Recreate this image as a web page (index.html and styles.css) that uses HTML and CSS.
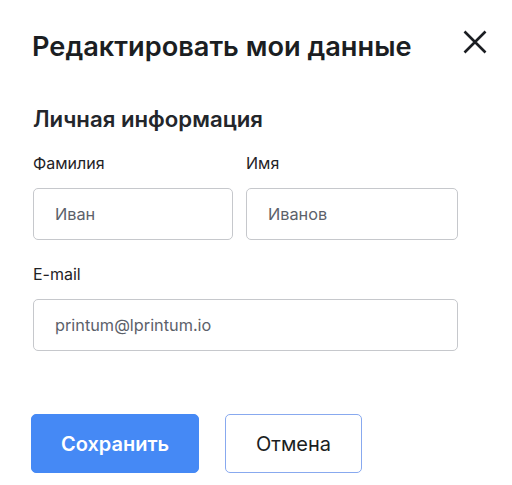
FILE: index.html
```html
<!DOCTYPE html>
<html lang="ru">
<head>
<meta charset="utf-8">
<link rel="stylesheet" href="styles.css">
</head>
<body>
<div class="modal">
  <div class="header">
    <h1 class="title">Редактировать мои данные</h1>
    <button class="close" aria-label="Закрыть">
      <svg width="24" height="24" viewBox="0 0 24 24"><path d="M1.5 1.5 L22.5 22.5 M22.5 1.5 L1.5 22.5" stroke="#1b1e22" stroke-width="2.6" fill="none"/></svg>
    </button>
  </div>
  <h2 class="subtitle">Личная информация</h2>
  <div class="grid">
    <div class="field">
      <label class="label">Фамилия</label>
      <div class="input">Иван</div>
    </div>
    <div class="field">
      <label class="label">Имя</label>
      <div class="input">Иванов</div>
    </div>
    <div class="field wide">
      <label class="label">E-mail</label>
      <div class="input">printum@lprintum.io</div>
    </div>
  </div>
  <div class="actions">
    <button class="btn primary">Сохранить</button>
    <button class="btn secondary">Отмена</button>
  </div>
</div>
</body>
</html>
```
FILE: styles.css
```css
* { box-sizing: border-box; }
body {
  margin: 0;
  background: #fff;
  font-family: Inter, "Noto Sans", sans-serif;
  color: #1b1e22;
}
.modal {
  padding: 30px 25px 0 32px;
}
.header {
  display: flex;
  justify-content: space-between;
  align-items: flex-start;
}
.title {
  margin: 0;
  font-size: 27.2px;
  line-height: 34px;
  font-weight: 600;
  color: #1b1e22;
}
.close {
  width: 24px;
  height: 24px;
  padding: 0;
  border: 0;
  background: none;
  display: block;
}
.close svg { display: block; }
.subtitle {
  margin: 41px 0 0 1px;
  font-size: 22.2px;
  line-height: 28px;
  font-weight: 600;
  color: #23262b;
}
.grid {
  display: grid;
  grid-template-columns: 200px 212px;
  column-gap: 13px;
  row-gap: 24px;
  margin: 20px 0 0 1px;
}
.wide { grid-column: 1 / span 2; }
.field {
  display: flex;
  flex-direction: column;
  gap: 15px;
}
.label {
  font-size: 16px;
  line-height: 20px;
  font-weight: 400;
  color: #1f2226;
}
.input {
  height: 52px;
  border: 1px solid #c6c8cc;
  border-radius: 5px;
  padding: 0 21px;
  display: flex;
  align-items: center;
  font-size: 16.3px;
  color: #5c616a;
}
.actions {
  display: flex;
  gap: 26px;
  margin: 63px 0 0 -1px;
}
.btn {
  height: 59px;
  border-radius: 5px;
  font-family: Inter, "Noto Sans", sans-serif;
  font-size: 20px;
  padding: 0;
}
.primary {
  width: 168px;
  background: #4589f5;
  border: 1px solid #4589f5;
  color: #fff;
  font-weight: 600;
}
.secondary {
  width: 137px;
  background: #fff;
  border: 1px solid #88a9ef;
  color: #1b1e22;
  font-weight: 400;
}
```
